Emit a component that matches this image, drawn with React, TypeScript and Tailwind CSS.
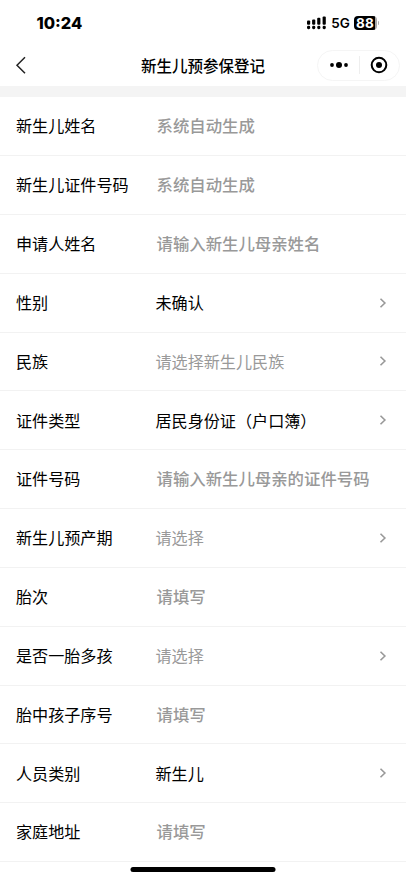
interface FormField {
  label: string;
  value?: string;
  placeholder?: string;
  select?: boolean;
}

const fields: FormField[] = [
  { label: '新生儿姓名', placeholder: '系统自动生成' },
  { label: '新生儿证件号码', placeholder: '系统自动生成' },
  { label: '申请人姓名', placeholder: '请输入新生儿母亲姓名' },
  { label: '性别', value: '未确认', select: true },
  { label: '民族', placeholder: '请选择新生儿民族', select: true },
  { label: '证件类型', value: '居民身份证（户口簿）', select: true },
  { label: '证件号码', placeholder: '请输入新生儿母亲的证件号码' },
  { label: '新生儿预产期', placeholder: '请选择', select: true },
  { label: '胎次', placeholder: '请填写' },
  { label: '是否一胎多孩', placeholder: '请选择', select: true },
  { label: '胎中孩子序号', placeholder: '请填写' },
  { label: '人员类别', value: '新生儿', select: true },
  { label: '家庭地址', placeholder: '请填写' },
];

function SignalIcon() {
  const bars = [
    { x: 0, y: 4.4 },
    { x: 5.1, y: 3.4 },
    { x: 10.2, y: 1.8 },
    { x: 15.6, y: 0.4 },
  ];
  return (
    <svg width="19" height="14" viewBox="0 0 19 14" fill="black">
      {bars.map((bar) => (
        <g key={bar.x}>
          <rect x={bar.x} y={bar.y} width="3.2" height={8.8 - bar.y} rx="1" />
          <rect x={bar.x} y="9.8" width="3.2" height="3.4" rx="1.4" />
        </g>
      ))}
    </svg>
  );
}

function StatusBar() {
  return (
    <div className="flex h-[45px] items-center justify-between pt-px pr-[26.6px] pl-[36.5px] font-['Inter',sans-serif]">
      <span className="text-[16.4px] leading-5 font-extrabold">10:24</span>
      <div className="flex items-center">
        <SignalIcon />
        <span className="ml-[5px] text-[13.5px] leading-4 font-semibold">5G</span>
        <div className="ml-[4px] flex h-[14px] w-[23px] items-center justify-center rounded-[4px] bg-linear-to-r from-black from-90% to-[#a8a8a8] to-90% pt-px pr-px text-[13.5px] leading-none font-bold text-white">
          88
        </div>
        <div className="ml-px h-1 w-[1.5px] rounded-r-full bg-[#b0b0b0]" />
      </div>
    </div>
  );
}

function NavBar() {
  return (
    <div className="grid h-[41px] grid-cols-[1fr_auto_1fr] items-center px-[6px]">
      <svg className="-mt-px ml-[9px]" width="12" height="18" viewBox="0 0 12 18" fill="none" stroke="#222" strokeWidth="1.5">
        <path d="M10 1.2 2 9.2l8 8" />
      </svg>
      <h1 className="-mt-[2px] text-[15.5px] leading-6 font-medium text-black">新生儿预参保登记</h1>
      <div className="-mt-px flex h-[31px] w-[83px] items-center justify-self-end rounded-full border border-[#f5f5f5]">
        <div className="flex flex-1 justify-center pl-px">
          <svg width="18" height="6" viewBox="0 0 18 6" fill="black">
            <circle cx="2" cy="3" r="1.9" />
            <circle cx="9" cy="3" r="3" />
            <circle cx="16" cy="3" r="1.9" />
          </svg>
        </div>
        <div className="h-[18px] w-px bg-[#eee]" />
        <div className="flex flex-1 justify-center">
          <svg width="18" height="18" viewBox="0 0 18 18">
            <circle cx="9" cy="9" r="7.3" fill="none" stroke="black" strokeWidth="2" />
            <circle cx="9" cy="9" r="3" fill="black" />
          </svg>
        </div>
      </div>
    </div>
  );
}

function FieldRow({ field }: { field: FormField }) {
  const { label, value, placeholder, select } = field;
  return (
    <div className="flex h-[58.85px] items-center border-b border-[#f2f2f2] pr-[19.5px] pl-4 text-[16.1px] leading-6">
      <div className="-mt-[1.6px] w-[139.5px] shrink-0 text-black">{label}</div>
      {value && <div className="-mt-[1.6px] flex-1 text-black">{value}</div>}
      {!value && select && <div className="-mt-[1.6px] flex-1 text-[#999]">{placeholder}</div>}
      {!value && !select && (
        <div className="-mt-[1.6px] flex-1 pl-px text-[16.4px] font-medium whitespace-nowrap text-[#999]">
          {placeholder}
        </div>
      )}
      {select && (
        <svg width="8" height="12" viewBox="0 0 8 12" fill="none" stroke="#999" strokeWidth="1.6">
          <path d="m1.5 1.7 4.4 4.3-4.4 4.3" />
        </svg>
      )}
    </div>
  );
}

export default function App() {
  return (
    <div className="relative h-[879px] w-[406px] overflow-hidden bg-white font-['Noto_Sans_CJK_SC',sans-serif] text-black">
      <StatusBar />
      <NavBar />
      <div className="h-[11px] bg-[#f4f4f4]" />
      <main className="pt-[0.2px]">
        {fields.map((field) => (
          <FieldRow key={field.label} field={field} />
        ))}
      </main>
      {/* home indicator */}
      <div className="absolute bottom-[7.5px] left-1/2 h-[5px] w-[145px] -translate-x-1/2 rounded-full bg-black" />
    </div>
  );
}
